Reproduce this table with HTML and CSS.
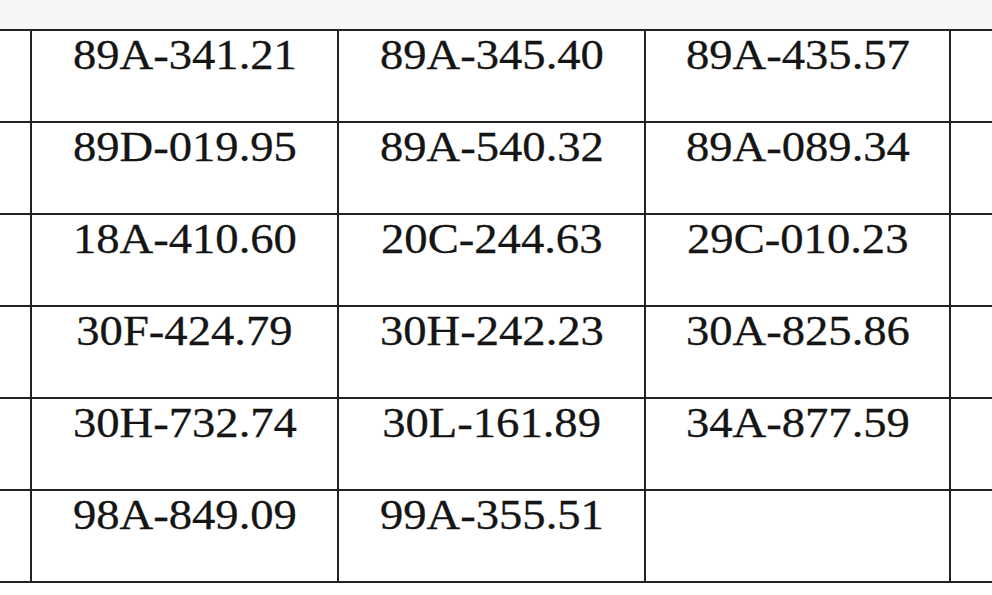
FILE: index.html
```html
<!DOCTYPE html>
<html>
<head>
<meta charset="utf-8">
<link rel="stylesheet" href="styles.css">
</head>
<body>
<div class="band"></div>
<table class="grid">
  <colgroup>
    <col class="c-edge-l">
    <col class="c-mid">
    <col class="c-mid">
    <col class="c-mid3">
    <col class="c-edge-r">
  </colgroup>
  <tbody>
    <tr><td></td><td><span class="v">89A-341.21</span></td><td><span class="v">89A-345.40</span></td><td><span class="v">89A-435.57</span></td><td></td></tr>
    <tr><td></td><td><span class="v">89D-019.95</span></td><td><span class="v">89A-540.32</span></td><td><span class="v">89A-089.34</span></td><td></td></tr>
    <tr><td></td><td><span class="v">18A-410.60</span></td><td><span class="v">20C-244.63</span></td><td><span class="v">29C-010.23</span></td><td></td></tr>
    <tr><td></td><td><span class="v">30F-424.79</span></td><td><span class="v">30H-242.23</span></td><td><span class="v">30A-825.86</span></td><td></td></tr>
    <tr><td></td><td><span class="v">30H-732.74</span></td><td><span class="v">30L-161.89</span></td><td><span class="v">34A-877.59</span></td><td></td></tr>
    <tr><td></td><td><span class="v">98A-849.09</span></td><td><span class="v">99A-355.51</span></td><td></td><td></td></tr>
  </tbody>
</table>
</body>
</html>
```

FILE: styles.css
```css
html, body {
  margin: 0;
  padding: 0;
  background: #ffffff;
  width: 992px;
  height: 595px;
  overflow: hidden;
}

.band {
  height: 29px;
  background: #f6f6f6;
}

.grid {
  width: 992px;
  table-layout: fixed;
  border-collapse: collapse;
  font-family: "Liberation Serif", "Times New Roman", serif;
  font-size: 42px;
  line-height: 48px;
  color: #151515;
}

.c-edge-l { width: 31px; }
.c-mid { width: 307px; }
.c-mid3 { width: 305px; }
.c-edge-r { width: 43px; }

.grid td {
  border: 2px solid #222222;
  height: 90px;
  padding: 0;
  text-align: center;
  vertical-align: top;
  white-space: nowrap;
  overflow: hidden;
}

.grid td:first-child { border-left: none; }
.grid td:last-child { border-right: none; }

.v {
  display: inline-block;
  transform: scaleX(1.11);
  transform-origin: center;
  -webkit-text-stroke: 0.3px #151515;
}
```
